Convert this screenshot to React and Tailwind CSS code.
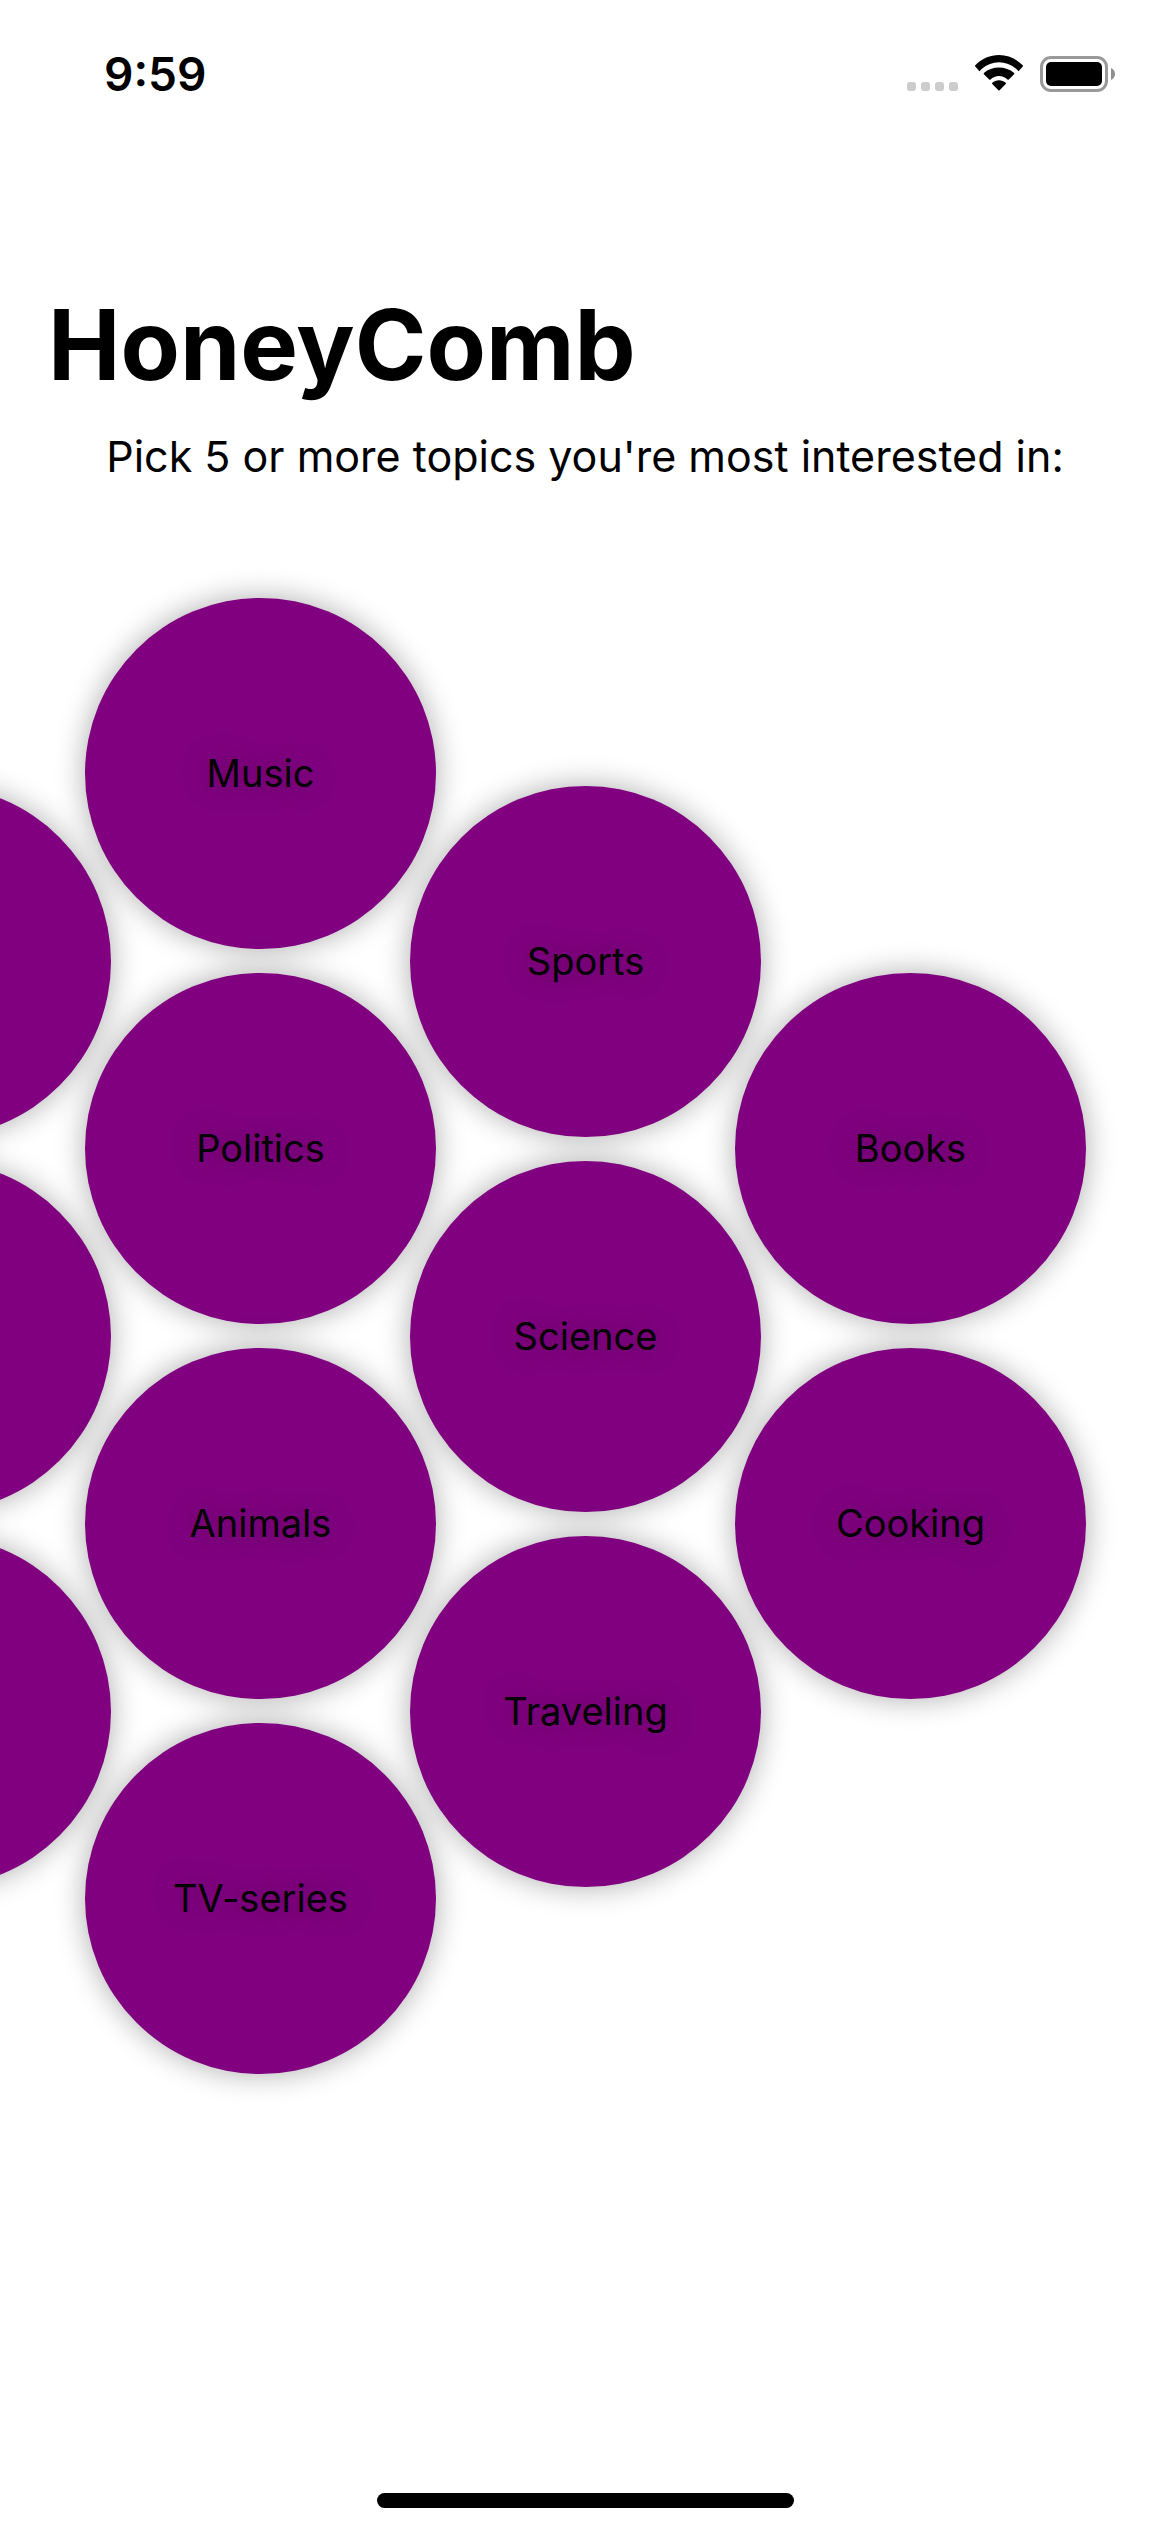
import { useState } from "react";

const columns = [
  { topics: ["", "", ""], offset: "pt-[188px]" },
  { topics: ["Music", "Politics", "Animals", "TV-series"], offset: "pt-0" },
  { topics: ["Sports", "Science", "Traveling"], offset: "pt-[188px]" },
  { topics: ["Books", "Cooking"], offset: "pt-[375px]" },
];

function StatusBar() {
  return (
    <div className="flex h-[141px] items-start justify-between pl-[104px] pr-[54px] pt-[46px]">
      <span className="text-[46px] leading-[56px] font-semibold">9:59</span>
      <div className="flex items-end gap-[17px] pt-[9px]">
        <div className="flex gap-[5px] pb-px" aria-hidden="true">
          <span className="size-[9px] rounded-[3px] bg-[#cccccc]" />
          <span className="size-[9px] rounded-[3px] bg-[#cccccc]" />
          <span className="size-[9px] rounded-[3px] bg-[#cccccc]" />
          <span className="size-[9px] rounded-[3px] bg-[#cccccc]" />
        </div>
        <svg className="h-[37px] w-[48px]" viewBox="0 0 48 37" role="img" aria-label="Wi-Fi">
          <path d="M24 7.200c6.300 0 12.300 2.300 17.100 6.500L43.600 16.200 47.700 11.600c.4-.4.4-1 0-1.400C41 3.700 32.700.1 24 .1S7 3.700.3 10.200c-.4.4-.4 1 0 1.400L4.400 16.200 6.900 13.700C11.700 9.500 17.700 7.200 24 7.200z" />
          <path d="M24 21c3.200 0 6.200 1.300 8.500 3.500.4.4 1 .4 1.300 0l5.300-5.200c.3-.4.3-.9 0-1.300-4.200-3.500-9.400-5.400-15.100-5.400S13.100 14.500 8.900 18c-.3.4-.3.900 0 1.300l5.300 5.200c.3.4.9.4 1.300 0C17.800 22.300 20.800 21 24 21z" />
          <path d="M30.700 28.900c.4-.4.4-.9 0-1.200C28.900 26.200 26.500 25.300 24 25.300s-4.900.9-6.700 2.400c-.4.300-.4.800 0 1.200l6.100 6.400c.3.300.9.300 1.200 0z" />
        </svg>
        <svg className="h-[36px] w-[76px]" viewBox="0 0 76 36" role="img" aria-label="Battery">
          <rect x="1.500" y="1.500" width="65" height="33" rx="9.500" fill="none" stroke="#999999" strokeWidth="3" />
          <rect x="6" y="6" width="56" height="24" rx="5" />
          <path d="M71 12c2.300 1 4 3.200 4 6s-1.700 5-4 6z" fill="#8f8f8f" />
        </svg>
      </div>
    </div>
  );
}

function Topic({ label, name }) {
  const [picked, setPicked] = useState(false);
  return (
    <button
      type="button"
      aria-label={label ? undefined : name}
      aria-pressed={picked}
      onClick={() => setPicked(!picked)}
      className="size-[351px] shrink-0 rounded-full bg-[#800080] pb-0.5 text-[38px] leading-[48px] shadow-[0_0_30px_rgba(0,0,0,0.33)] text-shadow-[0_0_30px_rgba(0,0,0,0.33)]"
    >
      {label}
    </button>
  );
}

export default function App() {
  return (
    <div className="flex min-h-screen flex-col overflow-x-hidden bg-white font-['Inter',sans-serif] text-black">
      <StatusBar />
      <header className="pt-[144px]">
        <h1 className="px-12 text-[97px] leading-[120px] font-bold">HoneyComb</h1>
        <p className="pt-[23px] text-center text-[43px] leading-[56px]">
          Pick 5 or more topics you're most interested in:
        </p>
      </header>
      <main className="-ml-[240px] flex items-start -space-x-[26px] pt-[114px]">
        {columns.map((column, c) => (
          <div key={c} className={"flex shrink-0 flex-col gap-6 " + column.offset}>
            {column.topics.map((label, i) => (
              <Topic key={i} label={label} name={"Topic " + (i + 1)} />
            ))}
          </div>
        ))}
      </main>
      <div className="mt-auto flex justify-center pb-6">
        <div className="h-[15px] w-[417px] rounded-full bg-black" />
      </div>
    </div>
  );
}
